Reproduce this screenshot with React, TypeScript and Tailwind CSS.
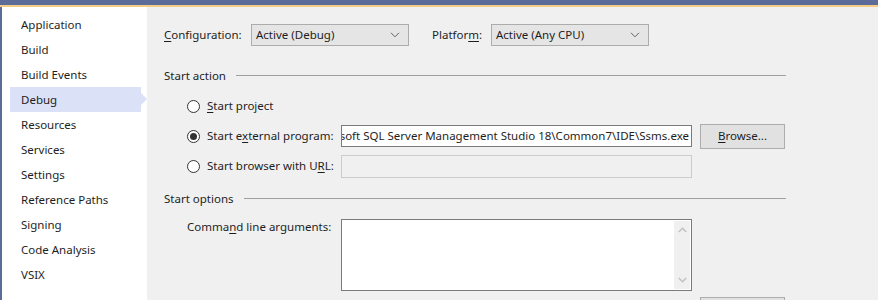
import React from "react";

const navItems = [
  "Application",
  "Build",
  "Build Events",
  "Debug",
  "Resources",
  "Services",
  "Settings",
  "Reference Paths",
  "Signing",
  "Code Analysis",
  "VSIX",
];

function Chevron() {
  return (
    <svg width="10" height="6" viewBox="0 0 10 6" className="shrink-0">
      <path d="M1 0.8 L5 4.8 L9 0.8" stroke="#5f5f5f" strokeWidth="1" fill="none" />
    </svg>
  );
}

function Dropdown({ value }: { value: string }) {
  return (
    <div className="w-[158px] h-[22px] bg-[#e5e5e5] border border-[#acacac] flex items-center pl-[4px] pr-[8px]">
      <span className="flex-1 whitespace-nowrap">{value}</span>
      <Chevron />
    </div>
  );
}

function Radio({ checked }: { checked?: boolean }) {
  return (
    <span className="w-[13px] h-[13px] rounded-full border border-[#333333] bg-white flex items-center justify-center shrink-0">
      {checked && <span className="w-[7px] h-[7px] rounded-full bg-[#333333]" />}
    </span>
  );
}

function SectionHeader({ title }: { title: string }) {
  return (
    <div className="ml-[17px] w-[622px] h-[16px] flex items-center">
      <span className="whitespace-nowrap leading-[16px]">{title}</span>
      <span className="flex-1 ml-[10px] h-px bg-[#a0a0a0] mb-[2px]" />
    </div>
  );
}

export default function App() {
  return (
    <div className="w-[878px] h-[300px] overflow-hidden bg-[#f0f0f0] flex flex-col font-['Noto_Sans',sans-serif] text-[11.5px] text-[#1e1e1e]">
      <div className="h-[5px] bg-[#5d6b99] shrink-0" />
      <div className="h-[2px] bg-[#f5cc84] shrink-0" />
      <div className="flex flex-1 min-h-0">
        {/* Sidebar */}
        <div className="w-[147px] shrink-0 bg-white border-l-2 border-[#5d6b99] pt-[5px]">
          {navItems.map((item) => {
            const selected = item === "Debug";
            return (
              <div
                key={item}
                className={
                  selected
                    ? "relative ml-[8px] w-[131px] h-[25px] flex items-center pl-[11px] bg-[#dbe2f8]"
                    : "ml-[8px] w-[131px] h-[25px] flex items-center pl-[11px]"
                }
              >
                <span className="whitespace-nowrap">{item}</span>
                {selected && (
                  <span className="absolute left-full top-[6px] w-0 h-0 border-l-[6px] border-l-[#dbe2f8] border-y-[6px] border-y-transparent" />
                )}
              </div>
            );
          })}
        </div>

        {/* Content */}
        <div className="flex-1 flex flex-col">
          <div className="mt-[17px] ml-[17px] h-[22px] flex items-center">
            <span className="w-[87px] whitespace-nowrap">
              <span className="underline underline-offset-2">C</span>onfiguration:
            </span>
            <Dropdown value="Active (Debug)" />
            <span className="ml-[23px] w-[59px] whitespace-nowrap">
              Platfor<span className="underline underline-offset-2">m</span>:
            </span>
            <Dropdown value="Active (Any CPU)" />
          </div>

          <div className="mt-[16px] ml-[15px] h-px bg-[#a0a0a0]" />

          <div className="mt-[6px]">
            <SectionHeader title="Start action" />
          </div>

          <div className="mt-[7px] ml-[40px] flex flex-col">
            <div className="h-[30px] flex items-center">
              <Radio />
              <span className="ml-[7px] whitespace-nowrap">
                <span className="underline underline-offset-2">S</span>tart project
              </span>
            </div>
            <div className="h-[30px] flex items-center">
              <div className="w-[154px] flex items-center">
                <Radio checked />
                <span className="ml-[7px] whitespace-nowrap">
                  Start e<span className="underline underline-offset-2">x</span>ternal program:
                </span>
              </div>
              <div className="w-[351px] h-[22px] bg-white border border-[#7a7a7a] flex items-center justify-end overflow-hidden pr-[2px]">
                <span className="whitespace-nowrap">
                  soft SQL Server Management Studio 18\Common7\IDE\Ssms.exe
                </span>
              </div>
              <div className="ml-[8px] w-[85px] h-[25px] bg-[#e1e1e1] border border-[#adadad] flex items-center justify-center">
                <span>
                  <span className="underline underline-offset-2">B</span>rowse...
                </span>
              </div>
            </div>
            <div className="h-[30px] flex items-center">
              <div className="w-[154px] flex items-center">
                <Radio />
                <span className="ml-[7px] whitespace-nowrap">
                  Start browser with U<span className="underline underline-offset-2">R</span>L:
                </span>
              </div>
              <div className="w-[351px] h-[23px] bg-[#f0f0f0] border border-[#cccccc]" />
            </div>
          </div>

          <div className="mt-[10px]">
            <SectionHeader title="Start options" />
          </div>

          <div className="mt-[12px] ml-[40px] flex items-start">
            <span className="w-[154px] leading-[16px] whitespace-nowrap">
              Comma<span className="underline underline-offset-2">n</span>d line arguments:
            </span>
            <div className="w-[351px] h-[72px] bg-white border border-[#7a7a7a] flex justify-end p-px">
              <div className="w-[16px] h-full bg-[#f0f0f0] flex flex-col items-center justify-between py-[6px]">
                <svg width="9" height="6" viewBox="0 0 9 6">
                  <path d="M0.8 5 L4.5 1.3 L8.2 5" stroke="#c2c2c2" strokeWidth="1.6" fill="none" />
                </svg>
                <svg width="9" height="6" viewBox="0 0 9 6">
                  <path d="M0.8 1 L4.5 4.7 L8.2 1" stroke="#c2c2c2" strokeWidth="1.6" fill="none" />
                </svg>
              </div>
            </div>
          </div>

          <div className="mt-[6px] ml-[194px] flex items-start">
            <div className="mt-[3px] w-[351px] h-[22px] bg-white border border-[#7a7a7a]" />
            <div className="ml-[8px] w-[85px] h-[25px] bg-[#e1e1e1] border border-[#adadad]" />
          </div>
        </div>
      </div>
    </div>
  );
}
